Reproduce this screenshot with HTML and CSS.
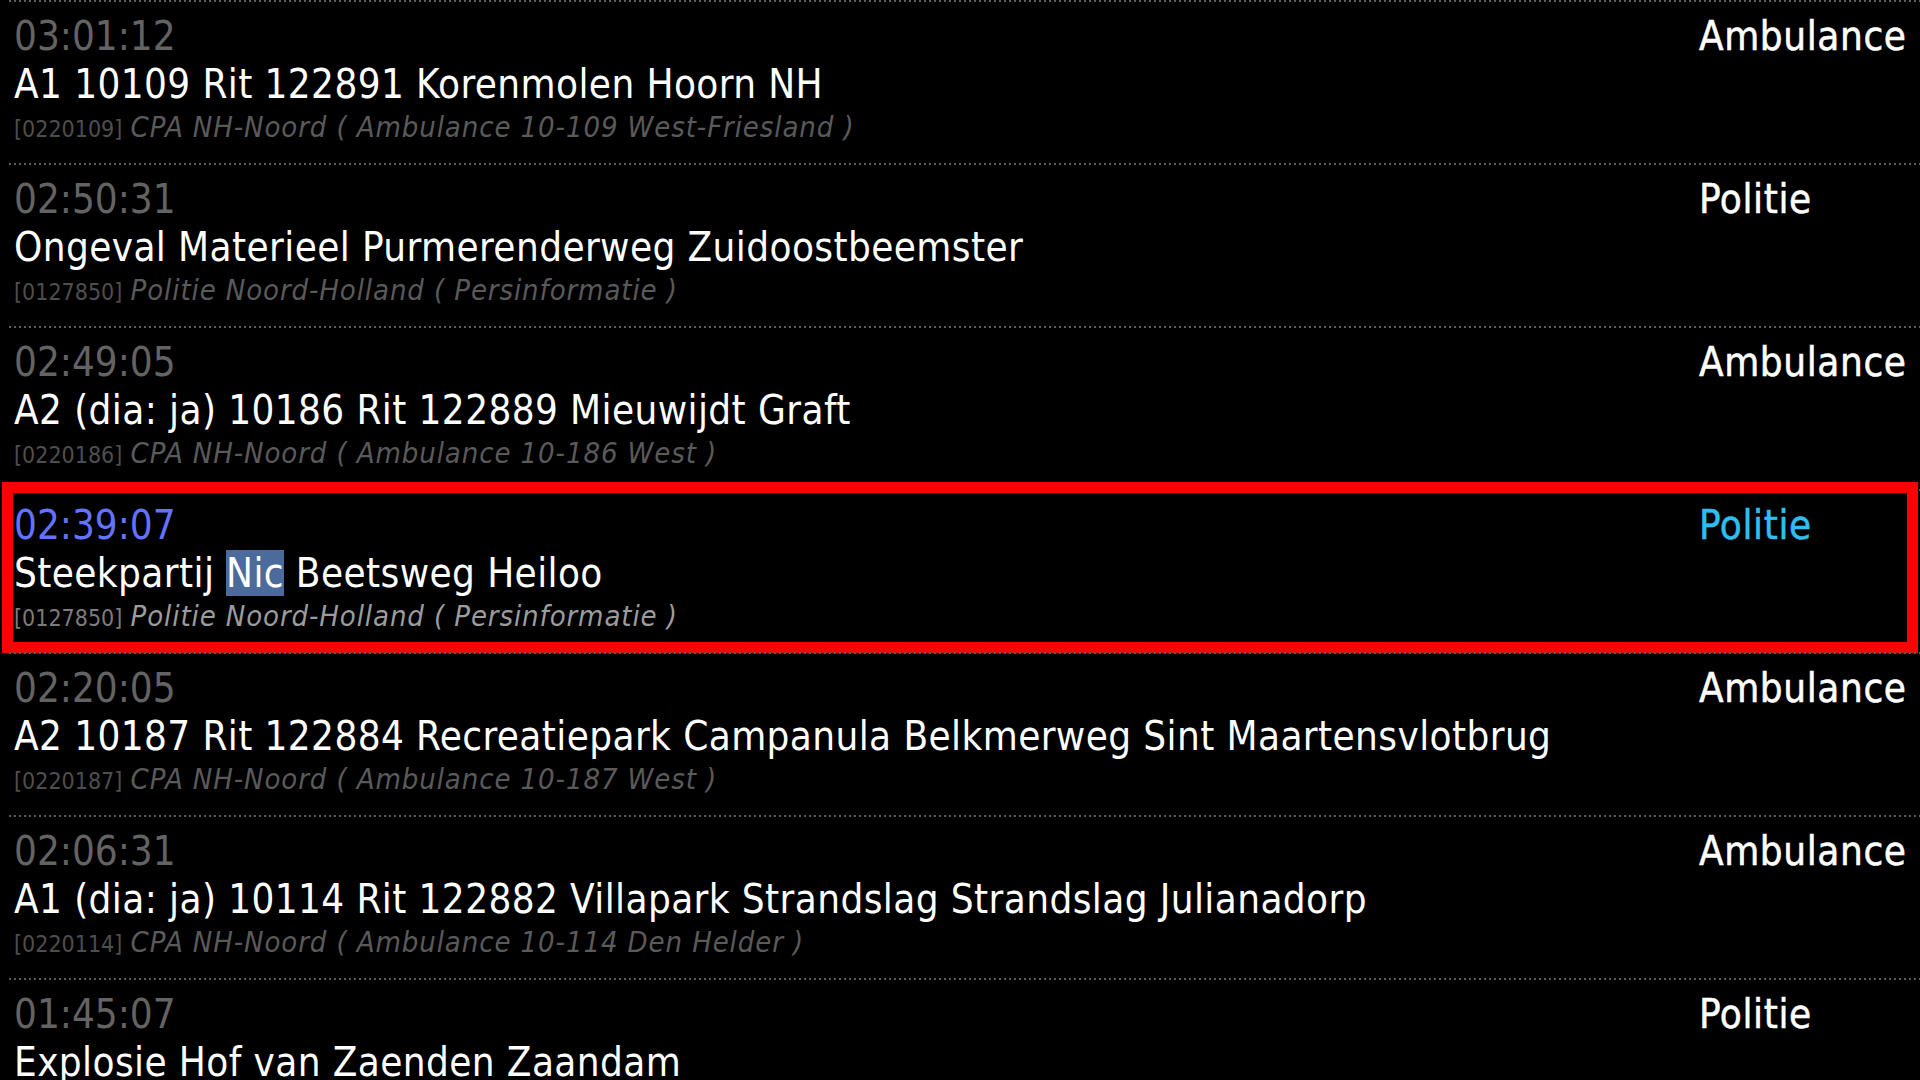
FILE: index.html
```html
<!DOCTYPE html>
<html lang="nl">
<head>
<meta charset="utf-8">
<title>Meldingen</title>
<link rel="stylesheet" href="styles.css">
</head>
<body>
<div class="feed">
  <article class="item">
    <div class="main">
      <div class="time">03:01:12</div>
      <div class="title">A1 10109 Rit 122891 Korenmolen Hoorn NH</div>
      <div class="source"><span class="code">[0220109]</span> <span class="org">CPA NH-Noord ( Ambulance 10-109 West-Friesland )</span></div>
    </div>
    <div class="cat">Ambulance</div>
  </article>
  <article class="item">
    <div class="main">
      <div class="time">02:50:31</div>
      <div class="title">Ongeval Materieel Purmerenderweg Zuidoostbeemster</div>
      <div class="source"><span class="code">[0127850]</span> <span class="org">Politie Noord-Holland ( Persinformatie )</span></div>
    </div>
    <div class="cat">Politie</div>
  </article>
  <article class="item">
    <div class="main">
      <div class="time">02:49:05</div>
      <div class="title">A2 (dia: ja) 10186 Rit 122889 Mieuwijdt Graft</div>
      <div class="source"><span class="code">[0220186]</span> <span class="org">CPA NH-Noord ( Ambulance 10-186 West )</span></div>
    </div>
    <div class="cat">Ambulance</div>
  </article>
  <article class="item selected">
    <div class="main">
      <div class="time">02:39:07</div>
      <div class="title">Steekpartij <span class="hl">Nic</span> Beetsweg Heiloo</div>
      <div class="source"><span class="code">[0127850]</span> <span class="org">Politie Noord-Holland ( Persinformatie )</span></div>
    </div>
    <div class="cat">Politie</div>
  </article>
  <article class="item">
    <div class="main">
      <div class="time">02:20:05</div>
      <div class="title">A2 10187 Rit 122884 Recreatiepark Campanula Belkmerweg Sint Maartensvlotbrug</div>
      <div class="source"><span class="code">[0220187]</span> <span class="org">CPA NH-Noord ( Ambulance 10-187 West )</span></div>
    </div>
    <div class="cat">Ambulance</div>
  </article>
  <article class="item">
    <div class="main">
      <div class="time">02:06:31</div>
      <div class="title">A1 (dia: ja) 10114 Rit 122882 Villapark Strandslag Strandslag Julianadorp</div>
      <div class="source"><span class="code">[0220114]</span> <span class="org">CPA NH-Noord ( Ambulance 10-114 Den Helder )</span></div>
    </div>
    <div class="cat">Ambulance</div>
  </article>
  <article class="item">
    <div class="main">
      <div class="time">01:45:07</div>
      <div class="title">Explosie Hof van Zaenden Zaandam</div>
    </div>
    <div class="cat">Politie</div>
  </article>
</div>
</body>
</html>
```
FILE: styles.css
```css
html, body {
  margin: 0;
  padding: 0;
  height: 100%;
  overflow: hidden;
  background: #000;
}

body {
  font-family: "DejaVu Sans Condensed", "DejaVu Sans", sans-serif;
  font-stretch: condensed;
  color: #fff;
}

.feed {
  padding-left: 9px;
}

.item {
  position: relative;
  display: grid;
  grid-template-columns: 1fr 221px;
  height: 163px;
  box-sizing: border-box;
  padding: 12px 0 0 5px;
  background-image: repeating-linear-gradient(to right, #5c5c5c 0 2px, transparent 2px 5px);
  background-size: 100% 2px;
  background-position: top left;
  background-repeat: no-repeat;
}

.main {
  min-width: 0;
}

.time {
  font-size: 40px;
  line-height: 48px;
  color: #636363;
}

.title {
  font-size: 40px;
  line-height: 48px;
  letter-spacing: 0.4px;
  color: #fff;
  white-space: nowrap;
}

.source {
  font-size: 29px;
  line-height: 38px;
  white-space: nowrap;
}

.source > span {
  line-height: 1;
}

.code {
  font-size: 23px;
  color: #4e4e4e;
}

.org {
  font-style: italic;
  letter-spacing: 0.9px;
  color: #5a5a5a;
}

.cat {
  font-size: 40px;
  line-height: 48px;
  letter-spacing: 0.6px;
  color: #fff;
  -webkit-text-stroke: 0.5px #fff;
}

.selected::after {
  content: "";
  position: absolute;
  top: -7px;
  bottom: -1px;
  left: -7px;
  right: 2px;
  border: 11px solid #ff0000;
  pointer-events: none;
}

.selected .time {
  color: #6373ff;
}

.selected .code {
  color: #7c7c7c;
}

.selected .org {
  color: #9c9c9c;
}

.selected .cat {
  color: #2fbef0;
  -webkit-text-stroke: 0.5px #2fbef0;
}

.hl {
  background: #4a6b9b;
}
```
